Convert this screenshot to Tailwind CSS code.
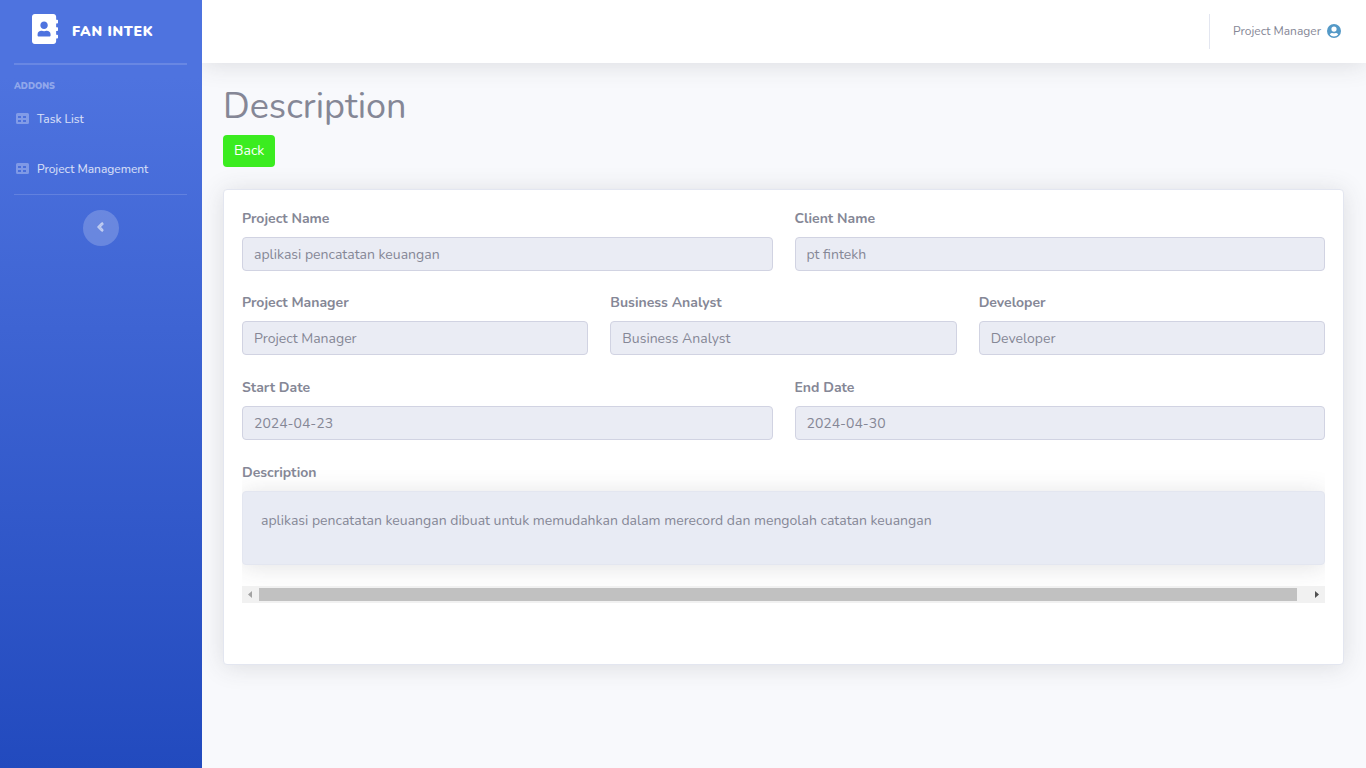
<!DOCTYPE html>
<html lang="id">
<head>
<meta charset="utf-8">
<title>Fan Intek - Description</title>
<script src="https://cdn.jsdelivr.net/npm/@tailwindcss/browser@4"></script>
</head>
<body class="flex min-h-screen bg-[#f8f9fc] font-['Nunito','Lato',sans-serif] text-sm leading-[22px] text-[#858796]">
<svg class="hidden" aria-hidden="true">
  <symbol id="table" viewBox="0 0 13 12"><path fill-rule="evenodd" d="M1.500 0h10A1.500 1.500 0 0 1 13 1.500v8a1.500 1.500 0 0 1-1.500 1.500h-10A1.500 1.500 0 0 1 0 9.500v-8A1.500 1.500 0 0 1 1.500 0zM2 3v2h3V3zM7 3v2h3V3zM2 7v2h3V7zM7 7v2h3V7z"/></symbol>
</svg>

<nav class="relative z-10 flex w-[202px] shrink-0 flex-col bg-[linear-gradient(180deg,#4e73df_10%,#224abe_100%)] pl-3.5 pr-[15px]">
  <a href="#" class="flex h-[63px] items-center gap-3.5 pb-[5px] pl-[18px] text-white">
    <svg class="h-[30px] w-[26px] fill-current" viewBox="0 0 448 512" preserveAspectRatio="none"><path d="M436 160c6.600 0 12-5.400 12-12v-40c0-6.600-5.400-12-12-12h-20V48c0-26.500-21.500-48-48-48H48C21.500 0 0 21.500 0 48v416c0 26.500 21.500 48 48 48h320c26.500 0 48-21.500 48-48v-48h20c6.600 0 12-5.400 12-12v-40c0-6.600-5.400-12-12-12h-20v-64h20c6.600 0 12-5.400 12-12v-40c0-6.600-5.400-12-12-12h-20v-64h20zm-228-32c35.300 0 64 28.700 64 64s-28.700 64-64 64-64-28.700-64-64 28.700-64 64-64zm112 236.800c0 10.600-10 19.200-22.400 19.200H118.400C106 384 96 375.400 96 364.800v-19.200c0-31.800 30.100-57.600 67.200-57.600h5c12.300 5.100 25.700 8 39.800 8s27.600-2.900 39.800-8h5c37.100 0 67.200 25.800 67.200 57.600v19.200z"/></svg>
    <span class="pt-1.5 font-black tracking-wider">FAN INTEK</span>
  </a>
  <hr class="border-t-2 border-white/15">
  <h2 class="mt-[11px] text-[9px] font-black leading-5 text-white/40">ADDONS</h2>
  <a href="#" class="-mt-0.5 flex h-[50px] items-center gap-2 pl-0.5 text-xs text-white/80"><svg class="h-3 w-[13px] fill-white/30"><use href="#table"/></svg>Task List</a>
  <a href="#" class="flex h-[50px] items-center gap-2 pl-0.5 text-xs text-white/80"><svg class="h-3 w-[13px] fill-white/30"><use href="#table"/></svg>Project Management</a>
  <hr class="border-white/15">
  <button type="button" aria-label="Collapse sidebar" class="mx-auto mt-[15px] flex size-9 items-center justify-center rounded-full bg-white/20 pb-0.5 pr-px">
    <svg class="h-3.5 w-[7px] fill-white/50 stroke-white/50 stroke-[36]" viewBox="0 0 256 512"><path d="M31.700 239l136-136c9.400-9.400 24.600-9.400 33.900 0l22.600 22.600c9.400 9.400 9.400 24.600 0 33.900L127.900 256l96.400 96.400c9.400 9.400 9.400 24.600 0 33.900L201.700 409c-9.400 9.400-24.600 9.400-33.900 0l-136-136c-9.500-9.400-9.500-24.600-.1-34z"/></svg>
  </button>
</nav>

<div class="flex min-w-0 flex-1 flex-col">
  <header class="flex h-[63px] items-center justify-end bg-white pr-[25px] shadow-[0_2px_25px_rgba(58,59,69,0.15)]">
    <div class="mr-[23px] h-[35px] border-r border-[#e3e6f0]"></div>
    <a href="#" class="flex items-center gap-1.5 pb-0.5 text-xs">Project Manager
      <svg class="size-[14px] fill-[#5499c7]" viewBox="0 0 14 14"><path fill-rule="evenodd" d="M7 0a7 7 0 1 0 0 14A7 7 0 0 0 7 0zM7 2.500a2.600 2.600 0 1 1 0 5.200a2.600 2.600 0 0 1 0-5.200zM2.800 10.400c.5-1 1.400-1.500 2.400-1.500c1.200.4 2.400.4 3.600 0c1 0 1.900.5 2.400 1.500c-1 1.300-2.500 2-4.200 2s-3.200-.7-4.200-2z"/></svg>
    </a>
  </header>
  <main class="pb-6 pl-[21px] pr-[22px] pt-[22px]">
    <h1 class="text-4xl/[43px] font-normal">Description</h1>
    <a href="#" class="mt-[7px] inline-block rounded bg-[#3bec20] px-[11px] py-[5px] text-white">Back</a>

    <form class="mt-[22px] rounded border border-[#e3e6f0] bg-white px-[18px] pb-[61px] pt-[18px] shadow-[0_2px_25px_rgba(58,59,69,0.15)]">
      <div class="grid grid-cols-2 gap-x-[22px]">
        <div><label for="pn" class="block font-bold">Project Name</label><input id="pn" readonly value="aplikasi pencatatan keuangan" class="mt-[7px] h-[34px] w-full rounded border border-[#d1d3e2] bg-[#eaecf4] px-[11px]"></div>
        <div><label for="cn" class="block font-bold">Client Name</label><input id="cn" readonly value="pt fintekh" class="mt-[7px] h-[34px] w-full rounded border border-[#d1d3e2] bg-[#eaecf4] px-[11px]"></div>
      </div>
      <div class="mt-[21px] grid grid-cols-3 gap-x-[22px]">
        <div><label for="pm" class="block font-bold">Project Manager</label><input id="pm" readonly value="Project Manager" class="mt-[7px] h-[34px] w-full rounded border border-[#d1d3e2] bg-[#eaecf4] px-[11px]"></div>
        <div><label for="ba" class="block font-bold">Business Analyst</label><input id="ba" readonly value="Business Analyst" class="mt-[7px] h-[34px] w-full rounded border border-[#d1d3e2] bg-[#eaecf4] px-[11px]"></div>
        <div><label for="dv" class="block font-bold">Developer</label><input id="dv" readonly value="Developer" class="mt-[7px] h-[34px] w-full rounded border border-[#d1d3e2] bg-[#eaecf4] px-[11px]"></div>
      </div>
      <div class="mt-[22px] grid grid-cols-2 gap-x-[22px]">
        <div><label for="sd" class="block font-bold">Start Date</label><input id="sd" readonly value="2024-04-23" class="mt-[7px] h-[34px] w-full rounded border border-[#d1d3e2] bg-[#eaecf4] px-[11px]"></div>
        <div><label for="ed" class="block font-bold">End Date</label><input id="ed" readonly value="2024-04-30" class="mt-[7px] h-[34px] w-full rounded border border-[#d1d3e2] bg-[#eaecf4] px-[11px]"></div>
      </div>
      <section class="mt-[22px] overflow-hidden">
        <h2 class="font-bold">Description</h2>
        <div class="mt-[7px] rounded border border-[#e3e6f0] bg-[#e8ebf4] px-[18px] pb-8 pt-[18px] shadow-[0_2px_25px_rgba(58,59,69,0.15)]">
          <p>aplikasi pencatatan keuangan dibuat untuk memudahkan dalam merecord dan mengolah catatan keuangan</p>
        </div>
        <div class="relative mt-[21px] flex h-[17px] items-center bg-[#f1f1f1]">
          <svg class="h-[17px] w-[17px] shrink-0 fill-[#a3a3a3]" viewBox="0 0 17 17"><path d="M10 5v7L6 8.500z"/></svg>
          <div class="mr-[11px] h-[13px] flex-1 bg-[#c1c1c1]"></div>
          <svg class="h-[17px] w-[17px] shrink-0 fill-[#505050]" viewBox="0 0 17 17"><path d="M7 5v7l4-3.500z"/></svg>
        </div>
      </section>
    </form>
  </main>
</div>
</body>
</html>
